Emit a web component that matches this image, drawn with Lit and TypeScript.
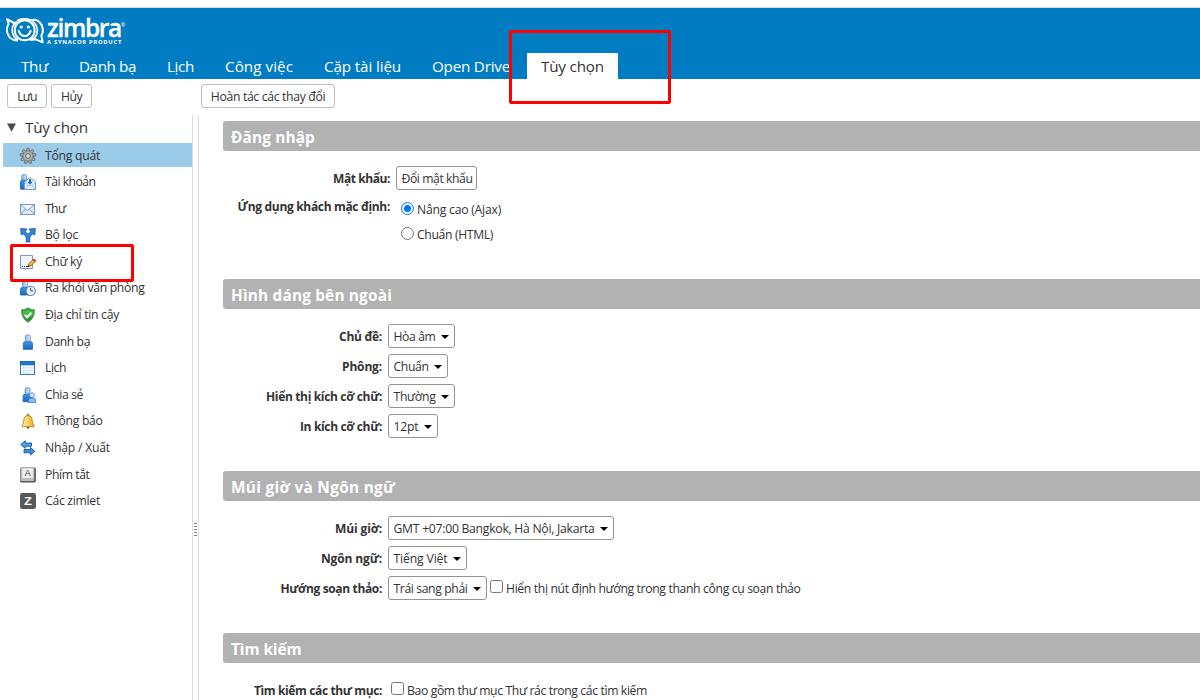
import { LitElement, html, css, svg } from "lit";
import { customElement, property } from "lit/decorators.js";

/** A single line of text tracked so that it fills a given width. */
@customElement("fit-text")
class FitText extends LitElement {
  @property({ type: String }) text = "";
  @property({ type: Number }) w = 0;
  static styles = css`
    :host { display: inline-block; white-space: pre; flex: none; }
    .run { display: inline-block; }
  `;
  render() {
    return html`<span class="run">${this.text}</span>`;
  }
  updated() {
    const run = this.renderRoot.querySelector(".run") as HTMLElement;
    run.style.letterSpacing = "0px";
    const natural = run.getBoundingClientRect().width;
    run.style.letterSpacing = `${(this.w - natural) / Math.max(1, this.text.length)}px`;
    this.style.width = `${this.w}px`;
  }
}

const person = (x: number, y: number, s: number) => svg`
  <g transform="translate(${x} ${y}) scale(${s})">
    <path d="M0.5 15.5V9.5Q0.5 7.5 3 7.5H7.5Q10 7.5 10 9.5V15.5Z" fill="url(#blue)" stroke="#1c62b0" stroke-width=".8"/>
    <path d="M2.6 2.4Q2.6.6 5.2.6T7.9 2.4V5.3Q7.9 7.4 5.2 7.4T2.6 5.3Z" fill="url(#pale)" stroke="#4d86c2" stroke-width=".8"/>
  </g>`;

const teeth = [0, 40, 80, 120, 160, 200, 240, 280, 320];

const icons: Record<string, unknown> = {
  gear: svg`${teeth.map(a => svg`<path d="M6.5 3.4L7 .2H9L9.5 3.4Z" fill="#aaa" stroke="#666" stroke-width=".8" transform="rotate(${a} 8 8)"/>`)}
    <circle cx="8" cy="8" r="4.9" fill="#b8b8b8" stroke="#777" stroke-width=".7"/>
    <circle cx="8" cy="8" r="2.4" fill="#d3e3ee" stroke="#5c5c5c" stroke-width="1"/>`,
  account: svg`<path d="M.5 15.2V8Q.5 6 2.5 6H7V15.2Z" fill="url(#blue)" stroke="#1c62b0" stroke-width=".8"/>
    <path d="M1.8 1.8Q2 .5 4.2.5T6.6 1.8V6H1.8Z" fill="url(#pale)" stroke="#4d86c2" stroke-width=".8"/>
    <path d="M4.5 8L10 3.5L15.5 8V15.5H4.5Z" fill="#eaf3fb" stroke="#6d9bcb"/>
    <path d="M4.8 15L8.6 11.5H11.4L15.2 15M4.8 8.7L8 11.5M15.2 8.7L12 11.5" fill="none" stroke="#8fb3d8" stroke-width=".8"/>
    <path d="M9 5.2H11V7.8H12.8L10 10.8L7.2 7.8H9Z" fill="#1867c4"/>`,
  mail: svg`<rect x=".5" y="3.5" width="14" height="10" fill="#d9e7f6" stroke="#7597c3"/>
    <path d="M1.8 4.3H13.2L7.5 8.8Z" fill="#f3f8fd"/>
    <path d="M1 4L7.5 9.5L14 4M1 13L5.6 8M14 13L9.4 8" fill="none" stroke="#7fa0ca" stroke-width=".9"/>`,
  filter: svg`<path d="M6.2 15V11.2Q6.2 9.8 5.2 8.8L3.2 6.8L1.2 8L.7 1.5L7 2L5.2 4.5L8 7.3L10.8 4.5L9 2L15.3 1.5L14.8 8L12.8 6.8L10.8 8.8Q9.8 9.8 9.8 11.2V15Z" fill="#2f86dc" stroke="#0d56ae" stroke-width=".8"/>`,
  sign: svg`<path d="M.5 1.5H12.5V14.5H.5Z" fill="#eef3fa" stroke="#7c97bd"/>
    <path d="M2 12.5H3M4 12.5H5M6 12.5H8" stroke="#222"/>
    <path d="M8 12.5L9 9.5L13.5 5L15.6 7.2L11 11.7Z" fill="#f3b631" stroke="#8a5b13" stroke-width=".8"/>
    <path d="M12.6 5.8L14 4.4L16 6.5L14.6 7.9Z" fill="#c93022"/><path d="M8 12.7L8.6 10.9L9.8 12.1Z" fill="#222"/>`,
  away: svg`${person(0, 0, 0.97)}
    <circle cx="10.7" cy="10.9" r="4.7" fill="#e8f1fa" stroke="#55779e"/>
    <path d="M10.7 7.8V10.9H13.2" fill="none" stroke="#3a5574"/>`,
  shield: svg`<path d="M8 .8Q10.5 2.8 14.4 2.6Q15 11.3 8 15.4Q1 11.3 1.6 2.6Q5.5 2.8 8 .8Z" fill="#1f9a26" stroke="#8a958a" stroke-width="1"/>
    <path d="M8 2.3Q10 3.8 13.1 3.8Q13.3 7 12 9.5L3.8 9.2Q2.7 6.5 2.9 3.8Q6 3.8 8 2.3Z" fill="#46bd43"/>
    <path d="M4.8 8L7.2 10.5L11.3 5.6" fill="none" stroke="#fff" stroke-width="2"/>`,
  person: person(2.8, 0.3, 0.97),
  calendar: svg`<rect x=".5" y="1.5" width="14" height="13" fill="#f5faff" stroke="#3779bd"/>
    <path d="M.5 1.5H14.5V4.8H.5Z" fill="#1f78cc" stroke="#1c66ad"/>
    <path d="M3 7.8H13M3 10.3H13M3 12.8H10" stroke="#b3c9e0" stroke-dasharray="1.6 1"/>`,
  share: svg`${person(2.6, 0, 0.95)}
    <circle cx="12" cy="8.2" r="2.4" fill="#dcebfa" stroke="#3c7fc7" stroke-width=".8"/>
    <path d="M8.4 15.4V13Q8.4 11.2 10.2 11.2H13.8Q15.6 11.2 15.6 13V15.4Z" fill="#8ac4f4" stroke="#2d79c9" stroke-width=".8"/>`,
  bell: svg`<path d="M7 2Q7 .7 8 .7T9 2V3H7Z" fill="#e0b33a" stroke="#8c6a1c" stroke-width=".6"/>
    <path d="M6.5 14H9.5Q9.5 15.8 8 15.8T6.5 14Z" fill="#7a5710"/>
    <path d="M8 2.5Q12 2.8 12.3 8Q12.4 10.8 14 12.2V13.7H2V12.2Q3.6 10.8 3.7 8Q4 2.8 8 2.5Z" fill="url(#gold)" stroke="#a87914" stroke-width=".8"/>`,
  swap: svg`<path d="M.8 4.6L5.2.8V3H11.5V6.2H5.2V8.4Z" fill="#4ba1ea" stroke="#0c57a6" stroke-width=".9"/>
    <path d="M14.8 11.2L10.4 7.4V9.6H4V12.8H10.4V15Z" fill="#3a90e0" stroke="#0c57a6" stroke-width=".9"/>`,
  key: svg`<rect x="0" y=".5" width="15.8" height="15" rx="1.8" fill="#444"/><rect x=".4" y=".6" width="14" height="13.6" rx="1.5" fill="#bcbcbc"/>
    <rect x="2.2" y="1.2" width="11" height="9.8" rx="1.2" fill="#ececec"/>
    <text x="7.8" y="9" text-anchor="middle" font-family="Liberation Sans" font-size="9" fill="#444">A</text>`,
  zimlet: svg`<rect x="0" y="0" width="16" height="16" rx="2.2" fill="#58585a"/>
    <text x="8" y="12" text-anchor="middle" font-family="Liberation Sans" font-weight="700" font-size="11.5" textLength="8" lengthAdjust="spacingAndGlyphs" fill="#fff">Z</text>`,
};

const tabs: [string, number, number][] = [
  ["Thư", 27, 31], ["Danh bạ", 57, 31], ["Lịch", 27, 31], ["Công việc", 68, 31],
  ["Cặp tài liệu", 77, 31], ["Open Drive", 78, 17],
];
const folders: [string, string, number][] = [
  ["gear", "Tổng quát", 55], ["account", "Tài khoản", 50.5], ["mail", "Thư", 20.5],
  ["filter", "Bộ lọc", 33], ["sign", "Chữ ký", 37], ["away", "Ra khỏi văn phòng", 99.5],
  ["shield", "Địa chỉ tin cậy", 74], ["person", "Danh bạ", 45], ["calendar", "Lịch", 21],
  ["share", "Chia sẻ", 38], ["bell", "Thông báo", 57.5], ["swap", "Nhập / Xuất", 65],
  ["key", "Phím tắt", 44.5], ["zimlet", "Các zimlet", 55],
];

@customElement("app-root")
class AppRoot extends LitElement {
  static styles = css`
    :host {
      display: flex; flex-direction: column; position: relative; box-sizing: border-box;
      width: 1200px; height: 700px; overflow: hidden; background: #fff; color: #333;
      font: 12.2px/18px "Open Sans", "Noto Sans", sans-serif;
    }
    * { box-sizing: border-box; }
    .banner { flex: none; height: 79px; border-top: 7px solid #fff; background: #007cc3; display: flex; flex-direction: column; }
    .edge { height: 1px; background: #d5dce1; flex: none; }
    .brand { display: flex; height: 38px; padding: 9px 0 0 6px; gap: 3px; }
    .mark { width: 38px; height: 28px; flex: none; }
    .words { display: flex; flex-direction: column; color: #fff; }
    .name { font: 600 24.5px/22px "Open Sans", sans-serif; height: 22px; display: flex; -webkit-text-stroke: .3px #fff; }
    .reg { font: 5px/8px "Open Sans", sans-serif; padding-top: 4px; -webkit-text-stroke: 0; }
    .tag { font: 700 5.8px/7px "Open Sans", sans-serif; }
    .tabs { display: flex; align-items: flex-end; height: 26px; margin-top: auto; padding-left: 21px; color: #fff; font-size: 15.2px; line-height: 26px; }
    .tab { flex: none; height: 26px; }
    .on { background: #fff; color: #333; width: 91px; padding-left: 14px; }
    .tools { flex: none; height: 36px; padding: 5px 0 0 7px; display: flex; gap: 4px; }
    .btn { height: 24px; border: 1px solid #bfbfbf; border-radius: 3px; display: flex; align-items: center; justify-content: center; background: #fff; padding-top: 1px; }
    .undo { margin-left: 105px; }
    .body { flex: 1; min-height: 0; display: flex; }
    .side { width: 193px; border-right: 1px solid #dedede; flex: none; padding-left: 3px; }
    .head { display: flex; align-items: center; height: 28px; font-size: 15.2px; line-height: 24px; padding: 0 0 4px 4px; gap: 9px; }
    .tri { width: 9px; height: 9px; margin-top: 1px; }
    .list { display: flex; flex-direction: column; gap: 2.6px; }
    .item { height: 24px; display: flex; align-items: center; padding-left: 17px; gap: 9px; }
    .item fit-text { margin-top: 1px; }
    .item svg { width: 16px; height: 16px; flex: none; overflow: visible; margin-top: 1px; }
    .sel { background: #9acbe8; }
    .split { width: 6px; border-right: 1px solid #dedede; flex: none; padding: 408px 1px 0 1px; }
    .grip { height: 14px; background: repeating-linear-gradient(#808080 0 1px, transparent 1px 3px); width: 3px; }
    .main { flex: 1; padding: 6px 0 0 24px; display: flex; flex-direction: column; }
    .title { flex: none; height: 30px; border-radius: 3px 0 0 3px; background: #b2b2b2; color: #fff; font-weight: 700; font-size: 15.4px; line-height: 33px; padding-left: 8px; }
    .rows { flex: none; display: flex; flex-direction: column; padding-top: 15px; gap: 6px; }
    .s1 { height: 128px; gap: 0; }
    .s2 { height: 162px; }
    .s3 { height: 132px; }
    .row { display: flex; align-items: center; height: 24px; flex: none; }
    .label { width: 159px; display: flex; justify-content: flex-end; font-weight: 700; font-size: 12px; margin-right: 6px; padding-top: 2px; flex: none; }
    .wide { width: 167px; }
    .client { align-items: flex-start; height: 60px; padding-top: 8px; }
    .radios { display: flex; flex-direction: column; gap: 6px; padding: 1px 0 0 5px; }
    .client .label { padding-top: 0; }
    .opt { display: flex; align-items: center; height: 19px; gap: 3px; }
    .opt fit-text { margin-top: 3px; }
    .radio { width: 13px; height: 13px; border: 1px solid #767676; border-radius: 50%; background: #fff; padding: 2px; flex: none; }
    .picked { border-color: #0075ff; }
    .dot { width: 7px; height: 7px; border-radius: 50%; background: #0075ff; }
    .check { width: 13px; height: 13px; border: 1px solid #767676; border-radius: 2.5px; background: #fff; flex: none; margin: 0 3px 4px 0; }
    .note { margin-top: 2px; }
    .field { border: 1px solid #949494; border-radius: 3px; height: 24px; display: flex; align-items: center; justify-content: space-between; padding: 1px 5px 0 4.5px; flex: none; }
    .field svg { width: 8px; height: 4px; }
    .gap { margin-left: 3px; }
    .mark-box { position: absolute; border: 3px solid #fe0000; border-radius: 2px; }
    .m1 { left: 509px; top: 30px; width: 162px; height: 74px; }
    .m2 { left: 10px; top: 244px; width: 124px; height: 38px; }
  `;

  private select(label: string, lw: number, text: string, tw: number, w: number, extra: unknown = "") {
    return html`<div class="row">
      <div class="label"><fit-text .text=${label} .w=${lw}></fit-text></div>
      <div class="field" style="width:${w}px"><fit-text .text=${text} .w=${tw}></fit-text>
        <svg viewBox="0 0 8 4"><path d="M0 0H8L4 4Z" fill="#000"/></svg></div>${extra}
    </div>`;
  }

  render() {
    return html`
      <header class="banner">
        <div class="edge"></div>
        <div class="brand">
          <svg class="mark" viewBox="0 0 38 28" fill="none" stroke="#fff" stroke-linecap="round" stroke-linejoin="round">
            <path d="M9 6.5L1 2.2Q3 5.5 2.2 8Q-.2 12 1.6 16.5Q4 23.6 11 23.4" stroke-width="2"/>
            <path d="M12 3.1Q18.5 1 25 3.1Q32 1.5 35.6 8Q38.2 14 35.4 18.5L36.7 25.3L29.7 22.3Q26 23 24.5 22.8" stroke-width="2"/>
            <circle cx="18.7" cy="13.3" r="10" stroke-width="2"/>
            <path d="M10.5 4.6Q5 9 6.4 15.5Q7.5 20 11.5 23M26.8 4.6Q32.5 9 31 16Q30 20.5 26 22.5" stroke-width="1.6"/>
            <path d="M12.8 14Q14.5 19 18.7 19T24.6 14" stroke-width="2.2"/>
            <circle cx="15.2" cy="10" r="1.6" fill="#fff" stroke="none"/><circle cx="22.3" cy="10" r="1.6" fill="#fff" stroke="none"/>
          </svg>
          <div class="words">
            <div class="name"><fit-text .text=${"zimbra"} .w=${74}></fit-text><span class="reg">®</span></div>
            <div class="tag"><fit-text .text=${"A SYNACOR PRODUCT"} .w=${75}></fit-text></div>
          </div>
        </div>
        <nav class="tabs">
          ${tabs.map(([t, w, gap]) => html`<div class="tab" style="margin-right:${gap}px"><fit-text .text=${t} .w=${w}></fit-text></div>`)}
          <div class="tab on"><fit-text .text=${"Tùy chọn"} .w=${63}></fit-text></div>
        </nav>
      </header>
      <div class="tools">
        <div class="btn" style="width:40px"><fit-text .text=${"Lưu"} .w=${19.5}></fit-text></div>
        <div class="btn" style="width:41px"><fit-text .text=${"Hủy"} .w=${21}></fit-text></div>
        <div class="btn undo" style="width:134px"><fit-text .text=${"Hoàn tác các thay đổi"} .w=${114.5}></fit-text></div>
      </div>
      <div class="body">
        <aside class="side">
          <div class="head"><svg class="tri" viewBox="0 0 9 9"><path d="M0 .5H9L4.5 8.8Z" fill="#4a4a4a"/></svg><fit-text .text=${"Tùy chọn"} .w=${63}></fit-text></div>
          <div class="list">
            ${folders.map(([i, t, w], n) => html`<div class="item ${n === 0 ? "sel" : ""}">
              <svg viewBox="0 0 16 16"><defs>
                <linearGradient id="blue" x2="0" y2="1"><stop stop-color="#3d93e6"/><stop offset="1" stop-color="#1c68bd"/></linearGradient>
                <linearGradient id="pale" x2="1" y2="0"><stop stop-color="#8ebeea"/><stop offset="1" stop-color="#d4e7f8"/></linearGradient>
                <linearGradient id="gold" x2="1" y2="0"><stop stop-color="#fff0a8"/><stop offset="1" stop-color="#e9b223"/></linearGradient>
              </defs>${icons[i]}</svg><fit-text .text=${t} .w=${w}></fit-text></div>`)}
          </div>
        </aside>
        <div class="split"><div class="grip"></div></div>
        <main class="main">
          <div class="title"><fit-text .text=${"Đăng nhập"} .w=${84}></fit-text></div>
          <div class="rows s1">
            <div class="row">
              <div class="label wide"><fit-text .text=${"Mật khẩu:"} .w=${57}></fit-text></div>
              <div class="field" style="width:81px"><fit-text .text=${"Đổi mật khẩu"} .w=${71}></fit-text></div>
            </div>
            <div class="row client">
              <div class="label wide"><fit-text .text=${"Ứng dụng khách mặc định:"} .w=${152.5}></fit-text></div>
              <div class="radios">
                <div class="opt"><span class="radio picked"><div class="dot"></div></span><fit-text .text=${"Nâng cao (Ajax)"} .w=${84}></fit-text></div>
                <div class="opt"><span class="radio"></span><fit-text .text=${"Chuẩn (HTML)"} .w=${76}></fit-text></div>
              </div>
            </div>
          </div>
          <div class="title"><fit-text .text=${"Hình dáng bên ngoài"} .w=${161}></fit-text></div>
          <div class="rows s2">
            ${this.select("Chủ đề:", 43, "Hòa âm", 42, 67)}
            ${this.select("Phông:", 40, "Chuẩn", 35, 60)}
            ${this.select("Hiển thị kích cỡ chữ:", 116, "Thường", 42, 67)}
            ${this.select("In kích cỡ chữ:", 82, "12pt", 25, 50)}
          </div>
          <div class="title"><fit-text .text=${"Múi giờ và Ngôn ngữ"} .w=${164}></fit-text></div>
          <div class="rows s3">
            ${this.select("Múi giờ:", 47, "GMT +07:00 Bangkok, Hà Nội, Jakarta", 201, 226)}
            ${this.select("Ngôn ngữ:", 61, "Tiếng Việt", 54, 79)}
            ${this.select("Hướng soạn thảo:", 101.5, "Trái sang phải", 74, 99,
              html`<span class="check gap"></span><fit-text class="note" .text=${"Hiển thị nút định hướng trong thanh công cụ soạn thảo"} .w=${294.5}></fit-text>`)}
          </div>
          <div class="title"><fit-text .text=${"Tìm kiếm"} .w=${70.5}></fit-text></div>
          <div class="rows">
            <div class="row">
              <div class="label"><fit-text .text=${"Tìm kiếm các thư mục:"} .w=${128}></fit-text></div>
              <span class="check gap"></span><fit-text class="note" .text=${"Bao gồm thư mục Thư rác trong các tìm kiếm"} .w=${240}></fit-text>
            </div>
          </div>
        </main>
      </div>
      <div class="mark-box m1"></div>
      <div class="mark-box m2"></div>
    `;
  }
}
